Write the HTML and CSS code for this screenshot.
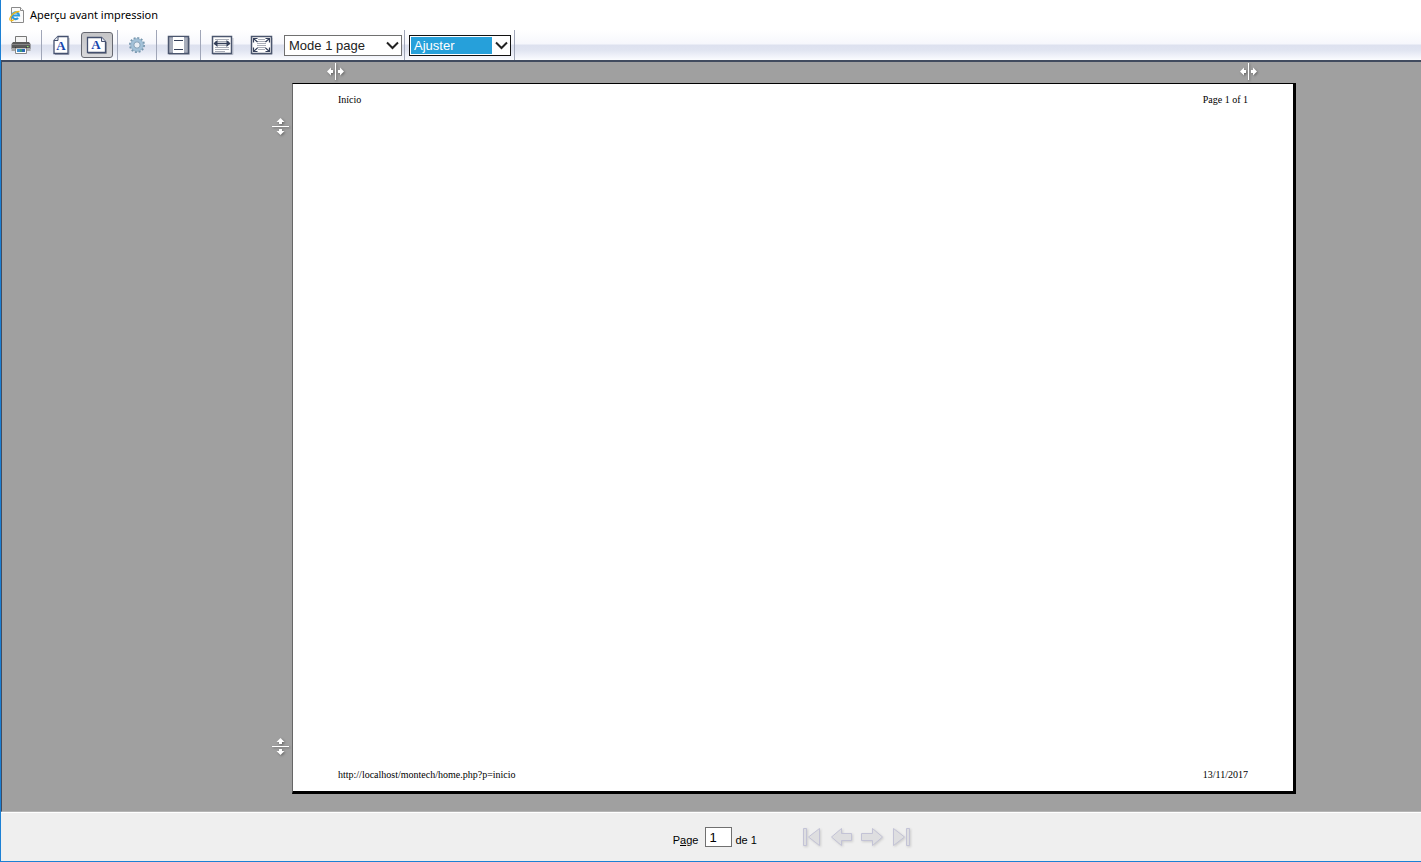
FILE: index.html
```html
<!DOCTYPE html>
<html lang="fr">
<head>
<meta charset="utf-8">
<title>Aperçu avant impression</title>
<link rel="stylesheet" href="styles.css">
</head>
<body>
<header class="titlebar">
  <svg class="app-icon" width="16" height="17" viewBox="0 0 16 17">
    <path d="M2.500.5h9l3 3v12h-12z" fill="#fbfbfb" stroke="#8a8a8a"/>
    <path d="M11.500.5v3h3" fill="#fff" stroke="#8a8a8a"/>
    <path d="M3.500 8.500h6.500a3.400 3.400 0 1 0-.9 2.500" fill="none" stroke="#2a9ae0" stroke-width="2.200"/>
    <path d="M1.500 13.500C-1 12 4 4.500 10.500 4.500" fill="none" stroke="#f0b91e" stroke-width="1.300"/>
    <path d="M1.500 13.500c1 .6 2.500-.2 3.500-1" fill="none" stroke="#f0b91e" stroke-width="1.300"/>
  </svg>
  <h1 class="title">Aperçu avant impression</h1>
</header>

<nav class="toolbar" aria-label="Outils">
  <div class="group group-print">
    <button class="tool" aria-label="Imprimer">
      <svg width="20" height="18" viewBox="0 0 20 18">
        <path d="M4.500.5h11v7h-11z" fill="#f5f5f5" stroke="#777"/>
        <path d="M2 6h16l1.500 2v5h-19V8z" fill="#5a5a5a"/>
        <path d="M1 8h18v1H1z" fill="#858585"/>
        <path d="M.5 12h19v3H.5z" fill="#a8a8a8"/>
        <path d="M4 11h12v1H4z" fill="#222"/>
        <path d="M4.500 12h11v5.500h-11z" fill="#fff" stroke="#888"/>
        <path d="M6 13h3v3H6z" fill="#3d8fd0"/><path d="M9 13h2v3H9z" fill="#3c9c78"/><path d="M11 13h3v3h-3z" fill="#2a67b5"/>
        <path d="M16 10h1.500v1H16z" fill="#8fe36c"/>
      </svg>
    </button>
  </div>
  <div class="group group-orient">
    <button class="tool" aria-label="Portrait">
      <svg width="18" height="20" viewBox="0 0 18 20">
        <path d="M3 19.500h14V3" fill="none" stroke="#a4a9b8"/>
        <path d="M6 1.500h10v17H2V5.500z" fill="#fff" stroke="#44506f" stroke-width="1.300"/>
        <path d="M6 1.500v4H2" fill="#e6eaf3" stroke="#44506f"/>
        <text x="9" y="15" text-anchor="middle" class="icon-letter">A</text>
      </svg>
    </button>
    <button class="tool tool-pressed" aria-label="Paysage" aria-pressed="true">
      <svg width="22" height="18" viewBox="0 0 22 18">
        <path d="M2 17.500h18.500V6" fill="none" stroke="#96999f"/>
        <path d="M1.500 1.500h14l4 4v11h-18z" fill="#fff" stroke="#44506f" stroke-width="1.300"/>
        <path d="M15.500 1.500v4h4" fill="#e6eaf3" stroke="#44506f"/>
        <text x="10" y="13" text-anchor="middle" class="icon-letter">A</text>
      </svg>
    </button>
  </div>
  <div class="group group-setup">
    <button class="tool" aria-label="Mise en page">
      <svg width="18" height="18" viewBox="0 0 18 18">
        <circle cx="9" cy="9" r="7" fill="none" stroke="#7797ae" stroke-width="2" stroke-dasharray="2 1.670"/>
        <circle cx="9" cy="9" r="4.800" fill="#e9eef4" stroke="#a3c2d9" stroke-width="3.200"/>
        <circle cx="9" cy="9" r="6.300" fill="none" stroke="#86a5bb" stroke-width=".6"/>
        <circle cx="9" cy="9" r="3.200" fill="#e9eef4" stroke="#7f9db4"/>
      </svg>
    </button>
  </div>
  <div class="group group-headers">
    <button class="tool" aria-label="En-têtes et pieds de page">
      <svg width="23" height="20" viewBox="0 0 23 20">
        <path d="M2 19.500h20.500V3" fill="none" stroke="#bfc3ce"/>
        <path d="M1.500 1.500h20v17h-20z" fill="#a7adbb" stroke="#4b566e" stroke-width="1.500"/>
        <path d="M6 2h11v16H6z" fill="#fff"/>
        <path d="M7 5.500h9M7 14.500h9" stroke="#35405a" stroke-width="1.200"/>
      </svg>
    </button>
  </div>
  <div class="group group-view">
    <button class="tool" aria-label="Pleine largeur">
      <svg width="23" height="20" viewBox="0 0 23 20">
        <path d="M2 19.500h20V3" fill="none" stroke="#bfc3ce"/>
        <path d="M1.500 1.500h19v17h-19z" fill="#fff" stroke="#4b566e" stroke-width="1.500"/>
        <path d="M4 4.500h14M4 6.500h14M5 10.500h12M4 12.500h14M4 14.500h14M4 16.500h10" stroke="#aaaeb8"/>
        <path d="M3 8.500h16" stroke="#35405a" stroke-width="1.500"/>
        <path d="M2.500 8.500l4-3.500v7zM19.500 8.500l-4-3.500v7z" fill="#35405a"/>
      </svg>
    </button>
    <button class="tool" aria-label="Page entière">
      <svg width="23" height="20" viewBox="0 0 23 20">
        <path d="M2 19.500h20V3" fill="none" stroke="#bfc3ce"/>
        <path d="M1.500 1.500h20v17h-20z" fill="#fff" stroke="#4b566e" stroke-width="1.500"/>
        <path d="M8 4.500h7M7 6.500h9M7 8.500h9M7 10.500h9M7 12.500h9M8 14.500h7" stroke="#aaaeb8"/>
        <path d="M3.500 7.500v-4h4M15.500 3.500h4v4M19.500 12.500v4h-4M7.500 16.500h-4v-4M3.500 3.500l4 3.500M19.500 3.500l-4 3.500M19.500 16.500l-4-3.500M3.500 16.500l4-3.500" fill="none" stroke="#35405a" stroke-width="1.200"/>
      </svg>
    </button>
    <span class="select-box">
      <select class="select select-pages" aria-label="Mode d'affichage"><option>Mode 1 page</option></select>
      <svg class="chevron" width="13" height="9" viewBox="0 0 13 9"><path d="M1 1.500l5.500 5.500L12 1.500" fill="none" stroke="#222" stroke-width="2"/></svg>
    </span>
  </div>
  <div class="group group-scale">
    <span class="select-box">
      <select class="select select-scale" aria-label="Échelle"><option>Ajuster</option></select>
      <svg class="chevron" width="13" height="9" viewBox="0 0 13 9"><path d="M1 1.500l5.500 5.500L12 1.500" fill="none" stroke="#222" stroke-width="2"/></svg>
    </span>
  </div>
</nav>

<main class="stage">
  <div class="ruler-top">
    <svg class="handle" width="18" height="18" viewBox="0 0 18 18"><path d="M9 0h1v17H9zM1 8.500L5 4.500v2.500h2v3H5v2.500zM18 8.500L14 4.500v2.500h-2v3h2v2.500z" fill="#fff"/></svg>
    <svg class="handle" width="18" height="18" viewBox="0 0 18 18"><path d="M9 0h1v17H9zM1 8.500L5 4.500v2.500h2v3H5v2.500zM18 8.500L14 4.500v2.500h-2v3h2v2.500z" fill="#fff"/></svg>
  </div>
  <div class="ruler-left">
    <svg class="handle" width="18" height="18" viewBox="0 0 18 18"><path d="M0 9h17v1H0zM8.500 1L12.500 5h-2.500v2H7V5H4.500zM8.500 18L12.500 14h-2.500v-2H7v2H4.500z" fill="#fff"/></svg>
    <svg class="handle" width="18" height="18" viewBox="0 0 18 18"><path d="M0 9h17v1H0zM8.500 1L12.500 5h-2.500v2H7V5H4.500zM8.500 18L12.500 14h-2.500v-2H7v2H4.500z" fill="#fff"/></svg>
  </div>
  <article class="sheet">
    <div class="sheet-line"><span>Início</span><span>Page 1 of 1</span></div>
    <div class="sheet-line"><span>http://localhost/montech/home.php?p=inicio</span><span>13/11/2017</span></div>
  </article>
</main>

<footer class="pager">
  <label class="pager-label" for="page-number">P<u>a</u>ge</label>
  <input class="pager-input" id="page-number" type="text" value="1">
  <span class="pager-total">de 1</span>
  <div class="pager-nav">
    <button class="nav" disabled aria-label="Première page"><svg class="nav-icon" width="22" height="20" viewBox="0 0 22 20"><path d="M2.500 1.500h3v17h-3zM18.500 1.500v17L7.500 10z"/></svg></button>
    <button class="nav" disabled aria-label="Page précédente"><svg class="nav-icon" width="22" height="20" viewBox="0 0 22 20"><path d="M.5 10l10-8.500v5h10v7h-10v5z"/></svg></button>
    <button class="nav" disabled aria-label="Page suivante"><svg class="nav-icon" width="22" height="20" viewBox="0 0 22 20"><path d="M21.500 10l-10-8.500v5H.5v7h11v5z"/></svg></button>
    <button class="nav" disabled aria-label="Dernière page"><svg class="nav-icon" width="22" height="20" viewBox="0 0 22 20"><path d="M15.500 1.500h3v17h-3zM2.500 1.500v17L13.500 10z"/></svg></button>
  </div>
</footer>
</body>
</html>
```
FILE: styles.css
```css
* { box-sizing: border-box; }

body {
  margin: 0;
  height: 100vh;
  display: flex;
  flex-direction: column;
  border-left: 1px solid #1c80d4;
  border-bottom: 1px solid #1c80d4;
  background: #efefef;
  font-family: "Liberation Sans", Arial, sans-serif;
  color: #000;
}

button {
  padding: 0;
  border: 0;
  background: none;
}

svg { display: block; }

.titlebar {
  display: flex;
  align-items: center;
  gap: 5px;
  height: 30px;
  padding: 0 8px;
  background: #fff;
}

.title {
  margin: 0;
  font: 11px/16px "Noto Sans", "Open Sans", sans-serif;
}

.toolbar {
  display: flex;
  height: 32px;
  border-bottom: 2px solid #414b5f;
  background: linear-gradient(#fff 0, #f6f7fc 14px, #dde1ef 15px, #e0e4f1 20px, #fbfcff 30px);
}

.group {
  display: flex;
  align-items: center;
  border-right: 1px solid #a0a6b8;
}

.group-print { width: 41px; padding-left: 10px; }
.group-orient { width: 76px; padding-left: 10px; gap: 11px; }
.group-setup { width: 39px; padding-left: 10px; }
.group-headers { width: 44px; padding-left: 10px; }
.group-view { width: 204px; padding-left: 10px; gap: 16px; }
.group-view .select-box { margin-left: -5px; }
.group-scale { width: 110px; padding-left: 4px; }

.tool-pressed {
  width: 32px;
  height: 26px;
  display: flex;
  align-items: center;
  justify-content: center;
  border: 1px solid #666870;
  border-radius: 3px;
  background: linear-gradient(#c5c5c7, #d9d9dc);
}

.icon-letter {
  font: bold 13px "Liberation Serif", serif;
  fill: #1746ae;
}

.select-box {
  position: relative;
  display: block;
}

.select {
  appearance: none;
  display: block;
  height: 21px;
  padding: 0 4px;
  border: 1px solid #707070;
  border-radius: 0;
  background: #fff;
  color: #222;
  font: 13px "Liberation Sans", Arial, sans-serif;
}

.select-pages { width: 118px; }

.select-scale {
  width: 102px;
  border-color: #111;
  color: #fff;
  background: linear-gradient(#26a0da, #26a0da) 1px 1px / 81px 17px no-repeat #fff;
}

.chevron {
  position: absolute;
  right: 3px;
  top: 6px;
  pointer-events: none;
}

.stage {
  flex: 1;
  display: grid;
  grid-template-columns: 290px 1fr;
  grid-template-rows: 21px 1fr;
  padding: 0 125px 17px 0;
  border-left: 1px solid #414b5f;
  border-bottom: 1px solid #b5b5b5;
  background: #a0a0a0;
}

.ruler-top {
  grid-column: 2;
  display: flex;
  justify-content: space-between;
  padding: 1px 39px 0 34px;
}

.ruler-left {
  grid-column: 1;
  display: flex;
  flex-direction: column;
  justify-content: space-between;
  align-items: flex-end;
  padding: 34px 2px 39px 0;
}

.handle { filter: drop-shadow(1px 1px 1px #666); }

.sheet {
  display: flex;
  flex-direction: column;
  justify-content: space-between;
  padding: 10px 45px;
  border: solid #000;
  border-width: 1px 3px 3px 1px;
  border-left-color: #666;
  background: #fff;
  font: 10px/12px "Liberation Serif", "Times New Roman", serif;
}

.sheet-line {
  display: flex;
  justify-content: space-between;
}

.pager {
  display: flex;
  align-items: center;
  height: 49px;
  padding-left: 47.3%;
  border-top: 1px solid #fff;
  font-size: 11px;
}

.pager-label, .pager-total { padding-top: 5px; }

.pager-input {
  width: 27px;
  height: 20px;
  margin: 0 3px 0 7px;
  padding: 0 3px;
  border: 1px solid #707070;
  background: #fff;
  font: 13px "Liberation Sans", Arial, sans-serif;
}

.pager-nav {
  display: flex;
  gap: 8px;
  margin-left: 44px;
}

.nav-icon {
  fill: #dedee0;
  stroke: #c3c3d6;
  filter: drop-shadow(1px 1px 1px #ccc);
}
```
